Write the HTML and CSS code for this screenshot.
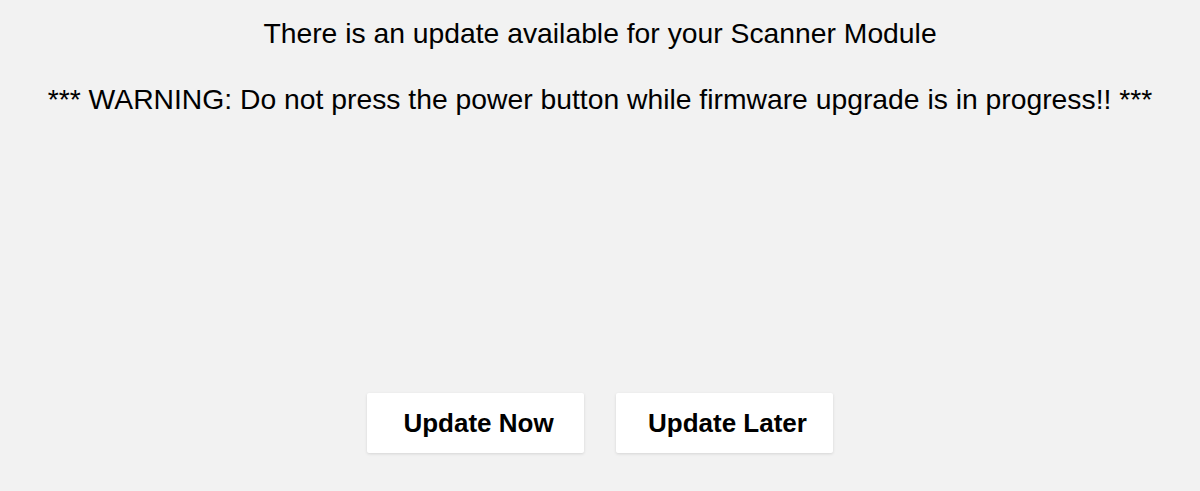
FILE: index.html
```html
<!DOCTYPE html>
<html lang="en">
<head>
  <meta charset="UTF-8">
  <meta name="viewport" content="width=device-width, initial-scale=1.0">
  <title>Scanner Update</title>
  <link rel="stylesheet" href="styles.css">
</head>
<body>
  <div class="update">
    <div class="messages">
      <p class="title">There is an update available for your Scanner Module</p>
      <p class="warning">*** WARNING: Do not press the power button while firmware upgrade is in progress!! ***</p>
    </div>
    <div class="actions">
      <button class="button">Update Now</button>
      <button class="button">Update Later</button>
    </div>
  </div>
</body>
</html>
```

FILE: styles.css
```css
html, body {
  margin: 0;
  height: 100%;
}

body {
  font-family: "Liberation Sans", Arial, sans-serif;
  background-color: #f2f2f2;
  color: #000;
}

.update {
  height: 100%;
  display: flex;
  flex-direction: column;
  justify-content: space-between;
  box-sizing: border-box;
  padding: 17px 0 38px;
}

.messages {
  text-align: center;
}

.messages p {
  margin: 0;
  font-size: 28.3px;
  line-height: 32px;
}

.warning {
  margin-top: 34px !important;
}

.actions {
  display: flex;
  justify-content: center;
  gap: 32px;
}

.button {
  width: 217px;
  height: 60px;
  padding: 0 0 0 6px;
  border: none;
  background-color: #fff;
  font-family: inherit;
  font-size: 26px;
  font-weight: bold;
  color: #000;
  border-radius: 2px;
  box-shadow: 0 1px 3px rgba(0, 0, 0, 0.12);
  cursor: pointer;
}

.button:hover {
  background-color: #fafafa;
}
```
